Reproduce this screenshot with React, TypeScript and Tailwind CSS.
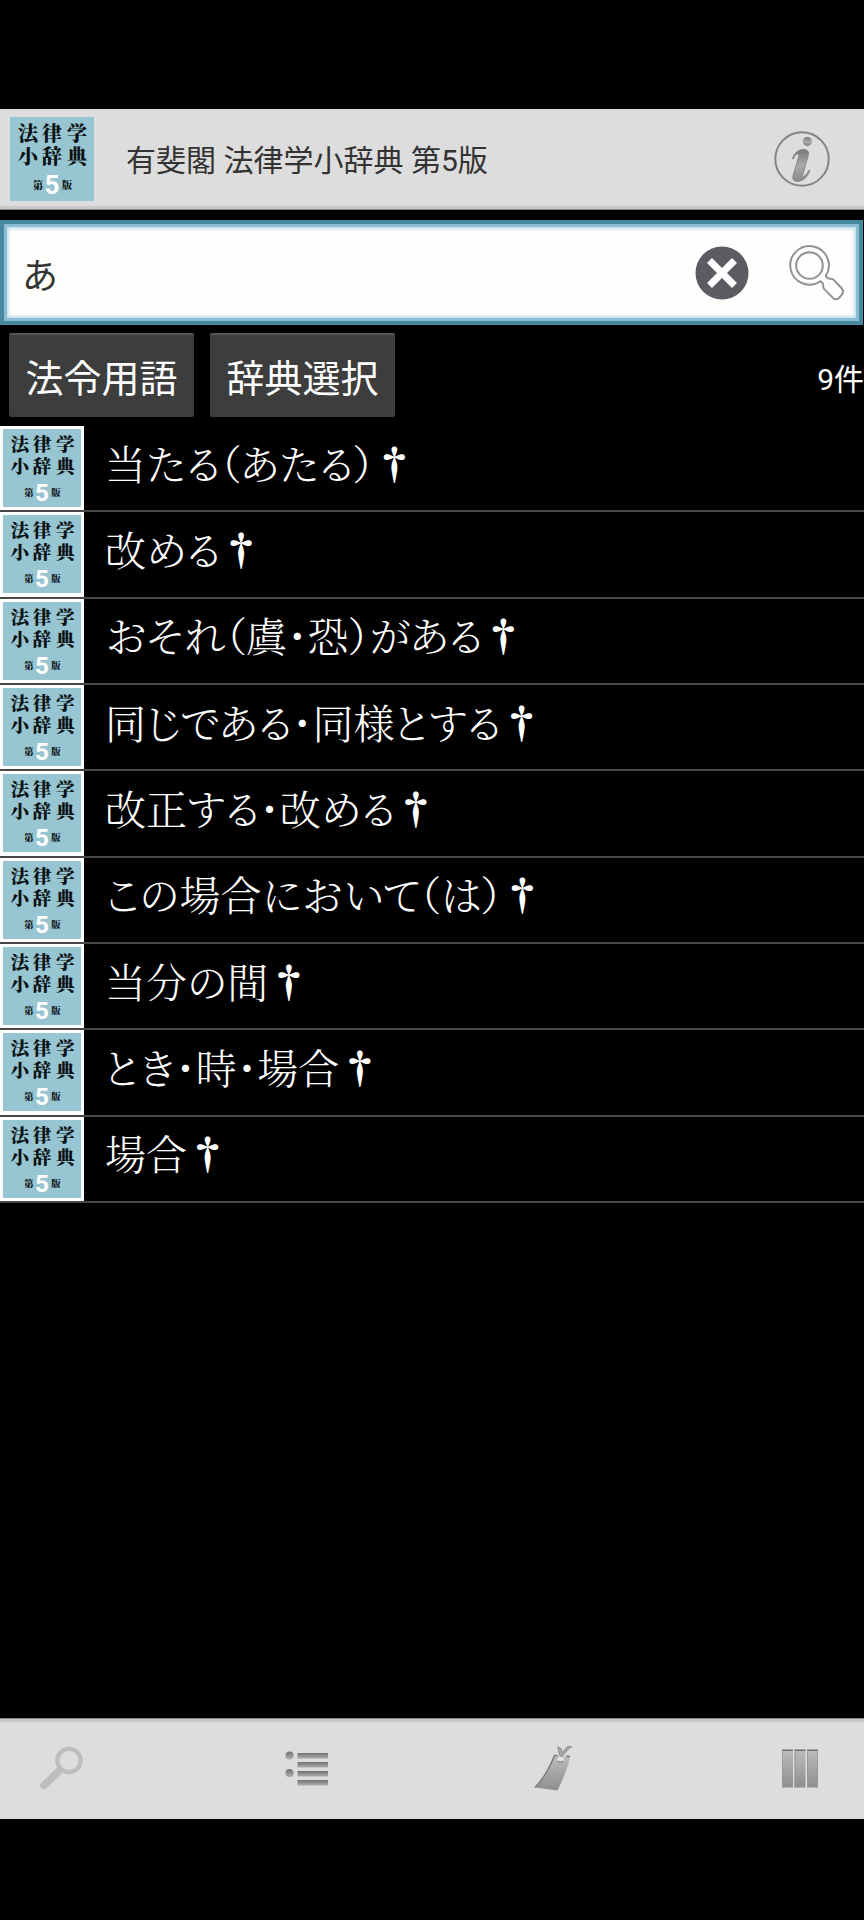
import { useState } from "react";

const ENTRIES = [
  "当たる（あたる）",
  "改める",
  "おそれ（虞・恐）がある",
  "同じである・同様とする",
  "改正する・改める",
  "この場合において（は）",
  "当分の間",
  "とき・時・場合",
  "場合",
];

function BookCover({ className }: { className: string }) {
  return (
    <svg viewBox="0 0 84 84" className={className} role="img" aria-label="法律学小辞典 第5版">
      <rect width="84" height="84" fill="#98c5d2" />
      <g
        className="font-['Noto_Serif_CJK_JP','Noto_Serif_JP','Noto_Sans_CJK_JP',serif] font-black"
        fill="#0b1214"
      >
        <text x="8 32 57" y="24" fontSize="20">法律学</text>
        <text x="8 32 57" y="47" fontSize="20">小辞典</text>
        <text x="23" y="72" fontSize="10">第</text>
        <text x="52" y="72" fontSize="10">版</text>
      </g>
      <text
        x="42"
        y="77"
        fontSize="26"
        textAnchor="middle"
        fill="#fff"
        className="font-['Roboto',sans-serif] font-bold"
      >
        5
      </text>
    </svg>
  );
}

function InfoIcon() {
  return (
    <svg viewBox="0 0 56 56" className="size-14">
      <defs>
        <linearGradient id="info" x1="0" y1="0" x2="0" y2="1">
          <stop offset="0" stopColor="#777" />
          <stop offset="0.5" stopColor="#aaa" />
          <stop offset="1" stopColor="#888" />
        </linearGradient>
      </defs>
      <circle cx="28" cy="28" r="26.7" fill="none" stroke="#858585" strokeWidth="2" />
      <circle cx="33.3" cy="10.6" r="4.6" fill="url(#info)" />
      <path
        d="M18.3 27.5C20.5 22 24 18.6 29 18.4c4.600-.2 6.400 2.300 5.200 6.500l-5.600 19.300c-.3 1.400.6 1.700 1.900.6 2-1.500 3.300-3.200 4.400-5.600l1 .6C33.800 45.600 29 50.400 23.500 50.400c-4.200 0-5.500-2.400-4.300-6.400l5.300-18.200c.5-1.800.2-3-1-2.900-1.700.2-3.200 2.400-4.200 5z"
        fill="url(#info)"
        stroke="#777"
        strokeWidth="0.7"
      />
    </svg>
  );
}

function ClearIcon() {
  return (
    <svg viewBox="0 0 54 54" className="size-[54px]">
      <circle cx="27" cy="27" r="26.500" fill="#5b5c62" />
      <path d="M14.500 14.500l25 25M39.500 14.500l-25 25" stroke="#fff" strokeWidth="7" />
    </svg>
  );
}

function SearchIcon() {
  return (
    <svg viewBox="0 0 56 56" className="size-14" fill="none" stroke="#929292" strokeWidth="2">
      <circle cx="20.500" cy="20.500" r="13.300" />
      <path d="M31.500 36.300A19.300 19.300 0 1 1 36.700 31C38 33 39.600 34 42 33.700c1.200 0 2 .3 2.800 1.200l7.800 8.300c1.900 2 1.800 4.300.2 6.500l-2.600 3c-2 1.900-4.300 2.100-6.300.2l-8.600-8.800c-1-1-1.300-2-1.100-3.400.2-2-.7-3.200-2.700-4.400z" />
    </svg>
  );
}

function TabSearchIcon() {
  return (
    <svg viewBox="0 0 48 48" className="size-12" fill="none" stroke="#bdbdbd">
      <circle cx="32" cy="16.500" r="11.700" strokeWidth="4.200" />
      <path d="M21.500 27.500L7 41.500" strokeWidth="7.500" strokeLinecap="round" />
    </svg>
  );
}

function TabListIcon() {
  return (
    <svg viewBox="0 0 48 48" className="size-12">
      <defs>
        <linearGradient id="bar" x1="0" y1="0" x2="0" y2="1">
          <stop offset="0" stopColor="#727272" />
          <stop offset="1" stopColor="#adadad" />
        </linearGradient>
      </defs>
      <g fill="url(#bar)">
        <circle cx="6.500" cy="11.500" r="4" />
        <circle cx="6.500" cy="29" r="4" />
        <rect x="14.500" y="9" width="30.500" height="5.500" />
        <rect x="14.500" y="18" width="30.500" height="5.500" />
        <rect x="14.500" y="27" width="30.500" height="5.500" />
        <rect x="14.500" y="36" width="30.500" height="5.500" />
      </g>
    </svg>
  );
}

function TabBookmarkIcon() {
  return (
    <svg viewBox="0 0 48 48" className="size-12">
      <defs>
        <linearGradient id="tag" x1="0" y1="0" x2="0" y2="1">
          <stop offset="0" stopColor="#bdbdbd" />
          <stop offset="1" stopColor="#8e8e8e" />
        </linearGradient>
      </defs>
      <path d="M24.500 11.500L40 13C37.500 25 33 35 27.500 46.500L5 43.500C14 34 19.500 24 24.500 11.500z" fill="url(#tag)" />
      <path d="M40 12.500l-4-.4M5 43.500C14 34 19.500 24 24.500 11.500h3" fill="none" stroke="#777" strokeWidth="1.300" />
      <ellipse cx="30.500" cy="15.200" rx="3.200" ry="2.500" fill="#e4e4e4" />
      <path d="M28 17.200q2.500 1.800 5 0" fill="none" stroke="#777" />
      <path d="M27.800 3l3.400 1.600.8 4.200 5.800-6.400 4 .6-2.600 1.400-7.400 8-2.400-1.400z" fill="#aaa" stroke="#7c7c7c" strokeWidth="0.8" />
    </svg>
  );
}

function TabShelfIcon() {
  return (
    <svg viewBox="0 0 48 48" className="size-12">
      <g fill="url(#tag)">
        <rect x="6" y="5.500" width="11" height="38" />
        <rect x="18.500" y="5.500" width="11" height="38" />
        <rect x="31" y="5.500" width="11" height="38" />
      </g>
      <path d="M6 6.200h11M18.500 6.200h11M31 6.200h11" stroke="#727272" strokeWidth="1.600" />
      <path d="M6.500 6v37.500M19 6v37.500M31.500 6v37.500M41.500 6v37.500" stroke="#999" />
    </svg>
  );
}

const TABS = [
  { name: "検索", icon: <TabSearchIcon /> },
  { name: "一覧", icon: <TabListIcon /> },
  { name: "しおり", icon: <TabBookmarkIcon /> },
  { name: "書棚", icon: <TabShelfIcon /> },
];

export default function App() {
  const [query, setQuery] = useState("あ");

  return (
    <div className="flex min-h-screen flex-col bg-black pt-[109px] pb-[101px] font-['Roboto','Noto_Sans_CJK_JP',sans-serif] text-white">
      <header className="flex h-[101px] items-center border-b border-[#888] bg-[#ddd] pr-[34px] pl-[10px] shadow-[inset_0_-3px_0_#c8c8c8]">
        <BookCover className="size-[84px]" />
        <h1 className="ml-8 flex-1 pt-0.5 text-[30px] text-[#333]">有斐閣 法律学小辞典 第5版</h1>
        <button type="button" aria-label="情報">
          <InfoIcon />
        </button>
      </header>

      <form
        className="mt-[10px] mr-px flex h-[105px] items-center border-4 border-[#4688a0] bg-[#fefefc] pr-[14px] pl-[18px] shadow-[inset_0_0_0_3px_#8bbcd6,inset_0_0_3px_5px_#c3dfed]"
        onSubmit={(e) => e.preventDefault()}
      >
        <input
          type="text"
          aria-label="検索語"
          value={query}
          onChange={(e) => setQuery(e.target.value)}
          className="min-w-0 flex-1 bg-transparent pt-2 text-[36px] text-[#333] outline-none"
        />
        <button type="button" aria-label="クリア" onClick={() => setQuery("")}>
          <ClearIcon />
        </button>
        <button type="submit" aria-label="検索" className="ml-10">
          <SearchIcon />
        </button>
      </form>

      <div className="mt-2 flex items-center gap-4 pl-[9px]">
        <button type="button" className="h-[84px] w-[185px] rounded-xs border-t-2 border-[#555] bg-[#3d3d3d] pt-1.5 text-[38px]">
          法令用語
        </button>
        <button type="button" className="h-[84px] w-[185px] rounded-xs border-t-2 border-[#555] bg-[#3d3d3d] pt-1.5 text-[38px]">
          辞典選択
        </button>
        <p className="ml-auto pt-2 text-[30px]">9件</p>
      </div>

      <ul className="mt-[9px] grid min-h-[777px] auto-rows-fr">
        {ENTRIES.map((entry) => (
          <li key={entry} className="border-b-2 border-[#484848]">
            <a href="#" className="flex h-full items-center">
              <span className="h-full bg-white p-[3px]">
                <BookCover className="size-[78px]" />
              </span>
              <span className="ml-[21px] pb-3 font-['Noto_Serif_CJK_JP','Noto_Serif_JP','Noto_Sans_CJK_JP',serif] text-[41px] leading-none font-light [font-feature-settings:'palt']">
                {entry}
                <span className="font-bold [font-feature-settings:normal]">†</span>
              </span>
            </a>
          </li>
        ))}
      </ul>

      <nav className="mt-auto flex h-[101px] items-center justify-between border-t border-[#888] bg-[#ddd] pr-10 pb-0.5 pl-[37px] shadow-[inset_0_3px_0_#c8c8c8]">
        {TABS.map((tab) => (
          <button key={tab.name} type="button" aria-label={tab.name}>
            {tab.icon}
          </button>
        ))}
      </nav>
    </div>
  );
}
